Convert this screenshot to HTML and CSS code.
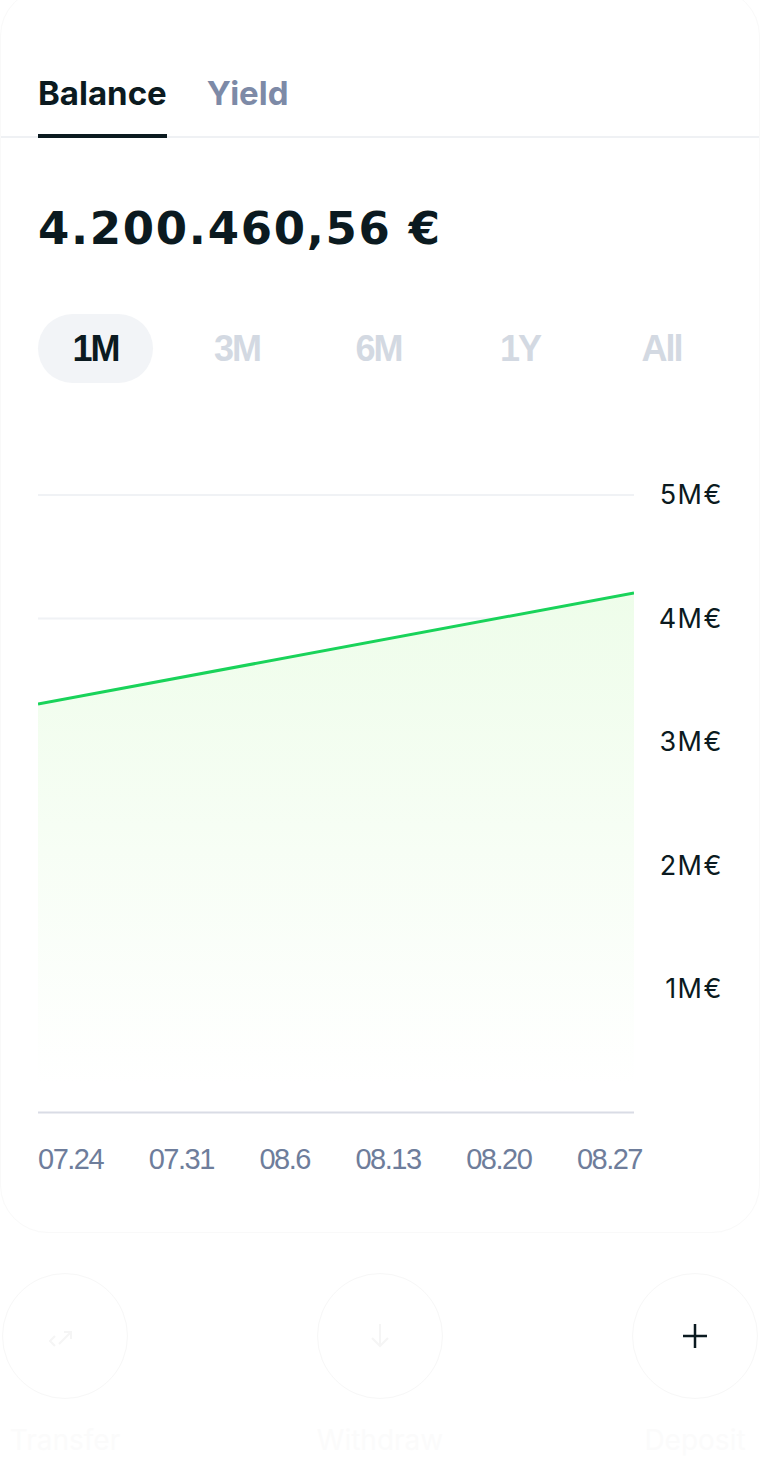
FILE: index.html
```html
<!DOCTYPE html>
<html>
<head>
  <meta charset="UTF-8">
  <title>Balance</title>
  <link rel="stylesheet" href="styles.css">
</head>
<body>
  <div class="card">
    <div class="tabs">
      <div class="tab active">Balance</div>
      <div class="tab">Yield</div>
    </div>

    <h1 class="amount">4.200.460,56 €</h1>

    <div class="periods">
      <button class="period active">1M</button>
      <button class="period">3M</button>
      <button class="period">6M</button>
      <button class="period">1Y</button>
      <button class="period">All</button>
    </div>

    <div class="chart">
      <svg class="plot" width="596" height="690" viewBox="0 0 596 690">
        <defs>
          <linearGradient id="area-fill" x1="0" y1="0" x2="0" y2="1">
            <stop offset="0" stop-color="#eefdea"/>
            <stop offset="1" stop-color="#ffffff"/>
          </linearGradient>
        </defs>
        <line class="grid" x1="0" y1="62" x2="596" y2="62"/>
        <line class="grid" x1="0" y1="185.5" x2="596" y2="185.5"/>
        <line class="grid" x1="0" y1="309" x2="596" y2="309"/>
        <line class="grid" x1="0" y1="432.5" x2="596" y2="432.5"/>
        <line class="grid" x1="0" y1="556" x2="596" y2="556"/>
        <polygon points="0,271 596,160 596,650 0,650" fill="url(#area-fill)"/>
        <line class="trend" x1="0" y1="271" x2="596" y2="160"/>
        <line class="baseline" x1="0" y1="679.5" x2="596" y2="679.5"/>
      </svg>
      <div class="y-axis">
        <span>5M€</span>
        <span>4M€</span>
        <span>3M€</span>
        <span>2M€</span>
        <span>1M€</span>
      </div>
    </div>

    <div class="x-axis">
      <span>07.24</span>
      <span>07.31</span>
      <span>08.6</span>
      <span>08.13</span>
      <span>08.20</span>
      <span>08.27</span>
    </div>
  </div>

  <div class="actions">
    <div class="action">
      <div class="action-circle">
        <svg width="40" height="40" viewBox="0 0 40 40" class="faint-icon">
          <path d="M14 28 L26 16 M19 16 L26 16 L26 23"/>
          <path d="M10 20 L5 25 L10 30"/>
        </svg>
      </div>
      <span class="action-label">Transfer</span>
    </div>
    <div class="action">
      <div class="action-circle">
        <svg width="40" height="40" viewBox="0 0 40 40" class="faint-icon">
          <path d="M20 8 L20 30 M12 22 L20 30 L28 22"/>
        </svg>
      </div>
      <span class="action-label">Withdraw</span>
    </div>
    <div class="action">
      <div class="action-circle">
        <svg width="26" height="26" viewBox="0 0 26 26" class="plus-icon">
          <path d="M13 1 L13 25 M1 13 L25 13"/>
        </svg>
      </div>
      <span class="action-label">Deposit</span>
    </div>
  </div>
</body>
</html>
```

FILE: styles.css
```css
body {
  margin: 0;
  background-color: #fff;
  font-family: Inter, "Liberation Sans", sans-serif;
  color: #0b1a20;
  overflow: hidden;
}

.card {
  margin-top: -12px;
  padding-top: 12px;
  height: 1245px;
  box-sizing: border-box;
  border: 1px solid #f9f9f9;
  border-radius: 48px;
}

.tabs {
  display: flex;
  gap: 40px;
  padding: 0 37px;
  margin-top: 71px;
  border-bottom: 2px solid #eff1f4;
}

.tab {
  font-size: 33px;
  font-weight: 700;
  color: #7d8aa7;
  padding-bottom: 20px;
  margin-bottom: -2px;
  border-bottom: 4px solid transparent;
  line-height: 42px;
}

.tab.active {
  color: #0b1a20;
  border-bottom-color: #0b1a20;
}

.amount {
  margin: 64px 0 0 37px;
  font-family: "DejaVu Sans", sans-serif;
  font-size: 45px;
  font-weight: 700;
  letter-spacing: 1.7px;
  line-height: 54px;
}

.periods {
  display: flex;
  justify-content: space-between;
  margin: 58px 40px 0 37px;
}

.period {
  width: 115px;
  height: 69px;
  border: none;
  border-radius: 35px;
  background: none;
  font-family: "Liberation Sans", sans-serif;
  font-size: 36px;
  font-weight: 700;
  letter-spacing: -2px;
  color: #d3d9e2;
  padding: 0;
}

.period.active {
  background-color: #f2f4f7;
  color: #0b1a20;
}

.chart {
  display: flex;
  margin: 50px 0 0 37px;
}

.plot {
  display: block;
}

.grid {
  stroke: #f0f2f5;
  stroke-width: 2;
}

.baseline {
  stroke: #d9dce5;
  stroke-width: 2;
}

.trend {
  stroke: #19d35a;
  stroke-width: 3;
}

.y-axis {
  width: 89px;
  display: flex;
  flex-direction: column;
}

.y-axis span {
  height: 123.5px;
  display: flex;
  align-items: center;
  justify-content: flex-end;
  font-size: 27px;
  letter-spacing: 1.5px;
}

.x-axis {
  display: flex;
  justify-content: space-between;
  width: 604px;
  margin: 20px 0 0 37px;
  font-family: "Liberation Sans", sans-serif;
  font-size: 29px;
  letter-spacing: -1.5px;
  color: #6e7d9b;
}

.actions {
  display: flex;
  justify-content: space-between;
  padding: 0 2px;
  margin-top: 40px;
}

.action {
  width: 126px;
  display: flex;
  flex-direction: column;
  align-items: center;
}

.action-circle {
  width: 126px;
  height: 126px;
  box-sizing: border-box;
  border: 1px solid #f7f7f7;
  border-radius: 50%;
  display: flex;
  align-items: center;
  justify-content: center;
}

.faint-icon path {
  fill: none;
  stroke: #f5f5f5;
  stroke-width: 2;
}

.plus-icon path {
  fill: none;
  stroke: #0b1a20;
  stroke-width: 2.5;
}

.action-label {
  margin-top: 24px;
  font-size: 28px;
  color: #fbfbfb;
  white-space: nowrap;
}
```
